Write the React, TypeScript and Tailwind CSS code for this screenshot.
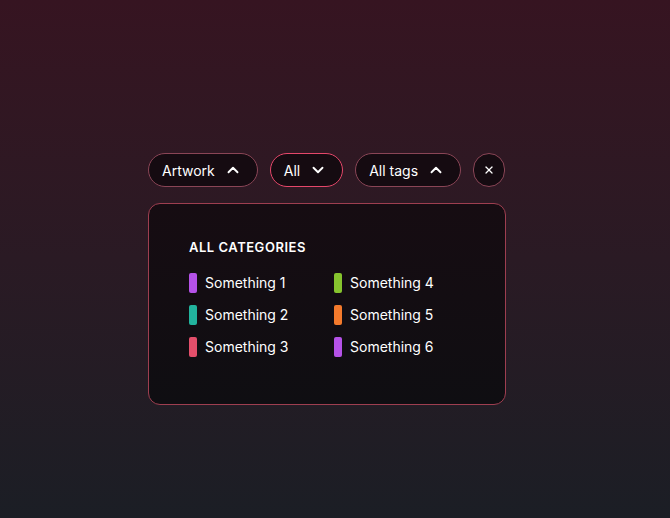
import { ChevronUp, ChevronDown, X } from 'lucide-react';

const categories = [
  { name: 'Something 1', color: 'bg-[#b552e8]' },
  { name: 'Something 4', color: 'bg-[#86c42e]' },
  { name: 'Something 2', color: 'bg-[#22b39d]' },
  { name: 'Something 5', color: 'bg-[#f47a2c]' },
  { name: 'Something 3', color: 'bg-[#e44f6b]' },
  { name: 'Something 6', color: 'bg-[#b552e8]' },
];

function Pill({ label, open, active }: { label: string; open: boolean; active?: boolean }) {
  return (
    <button
      className={`h-[34px] flex items-center gap-[9px] pl-[13px] pr-[15px] rounded-full bg-[#150b11] text-white text-[14px] border ${active ? 'border-[#e5476a]' : 'border-[#8a4556]'}`}
    >
      <span>{label}</span>
      {open ? <ChevronUp className="w-[18px] h-[18px]" strokeWidth={2.5} /> : <ChevronDown className="w-[18px] h-[18px]" strokeWidth={2.5} />}
    </button>
  );
}

export default function App() {
  return (
    <div
      className="w-full min-h-[518px] bg-gradient-to-b from-[#361421] via-[#2a1a24] to-[#1b1e25] flex justify-center pr-4 pt-[153px]"
      style={{ fontFamily: "Inter, 'Noto Sans', sans-serif" }}
    >
      <div className="w-[358px]">
        <div className="flex items-center gap-3">
          <Pill label="Artwork" open />
          <Pill label="All" open={false} active />
          <Pill label="All tags" open />
          <button className="w-[32px] h-[34px] rounded-full bg-[#150b11] border border-[#8a4556] flex items-center justify-center text-white">
            <X className="w-[12px] h-[12px]" strokeWidth={2.5} />
          </button>
        </div>
        <div className="mt-4 h-[202px] rounded-xl border border-[#9e3e50] bg-gradient-to-b from-[#160c12] to-[#0f0e12] pl-10 pt-[34px]">
          <div className="text-white text-[13px] font-semibold tracking-[0.04em]">ALL CATEGORIES</div>
          <div className="mt-[15px] grid grid-cols-[145px_145px] gap-y-3">
            {categories.map((c) => (
              <div key={c.name} className="flex items-center gap-2 h-5">
                <span className={`w-[8px] h-5 rounded-[2px] ${c.color}`} />
                <span className="text-white text-[14px]">{c.name}</span>
              </div>
            ))}
          </div>
        </div>
      </div>
    </div>
  );
}
